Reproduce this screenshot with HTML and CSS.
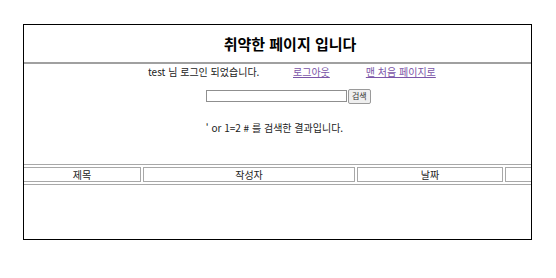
FILE: index.html
```html
<!DOCTYPE html>
<html lang="ko">
<head>
<meta charset="utf-8">
<link rel="stylesheet" href="styles.css">
</head>
<body>
<div class="frame">
  <div class="title">취약한 페이지 입니다</div>
  <hr class="rule">
  <div class="status">
    <span class="who">test 님 로그인 되었습니다.</span>
    <a class="link" href="#">로그아웃</a>
    <a class="link" href="#">맨 처음 페이지로</a>
  </div>
  <form class="search">
    <input class="field" type="text">
    <button class="btn" type="button">검색</button>
  </form>
  <div class="result">' or 1=2 # 를 검색한 결과입니다.</div>
  <table class="board">
    <tr>
      <th class="c1">제목</th>
      <th class="c2">작성자</th>
      <th class="c3">날짜</th>
      <th class="c4"></th>
    </tr>
  </table>
</div>
</body>
</html>
```
FILE: styles.css
```css
html, body {
  margin: 0;
  background: #fff;
}
body {
  padding: 24px 0 0 23px;
  font-family: "Noto Sans CJK KR", "Noto Sans", sans-serif;
  font-size: 10px;
  color: #222;
}
.frame {
  width: 507px;
  height: 214px;
  border: 1px solid #000;
  overflow: hidden;
  box-sizing: content-box;
}
.title {
  height: 37px;
  display: flex;
  align-items: center;
  justify-content: center;
  padding-left: 25px;
  font-size: 15px;
  font-weight: bold;
  color: #000;
}
.rule {
  height: 2px;
  margin: 0;
  border: 0;
  background: #a0a0a0;
}
.status {
  display: flex;
  padding-left: 124px;
  margin-top: 1px;
  height: 13px;
  line-height: 13px;
}
.who {
  width: 145px;
}
.link {
  color: #7b55a8;
  text-decoration: underline;
  margin-right: 36px;
}
.search {
  display: flex;
  align-items: center;
  padding-left: 182px;
  margin: 10px 0 0;
  height: 16px;
}
.field {
  width: 141px;
  height: 12px;
  box-sizing: border-box;
  border: 1px solid #8f8f8f;
  padding: 0;
  margin: 0;
}
.btn {
  height: 15px;
  padding: 0 3px;
  margin: 0 0 0 1px;
  font-family: "Noto Sans CJK KR", sans-serif;
  font-size: 8px;
  line-height: 12px;
  background: #efefef;
  border: 1px solid #9a9a9a;
  border-radius: 2px;
  color: #333;
}
.result {
  margin-top: 17px;
  height: 14px;
  line-height: 14px;
  text-align: center;
  padding-right: 6px;
}
.board {
  margin-top: 29px;
  border-collapse: separate;
  border-spacing: 2px;
  border: 1px solid #a8a8a8;
  border-left: 0;
  margin-left: -3px;
  width: 620px;
  table-layout: fixed;
}
.board th {
  font-weight: normal;
  height: 13px;
  padding: 0;
  line-height: 13px;
  border: 1px solid #a8a8a8;
  font-size: 10px;
  color: #222;
}
.c1 { width: 116px; }
.c2 { width: 210px; }
.c3 { width: 144px; }
```
